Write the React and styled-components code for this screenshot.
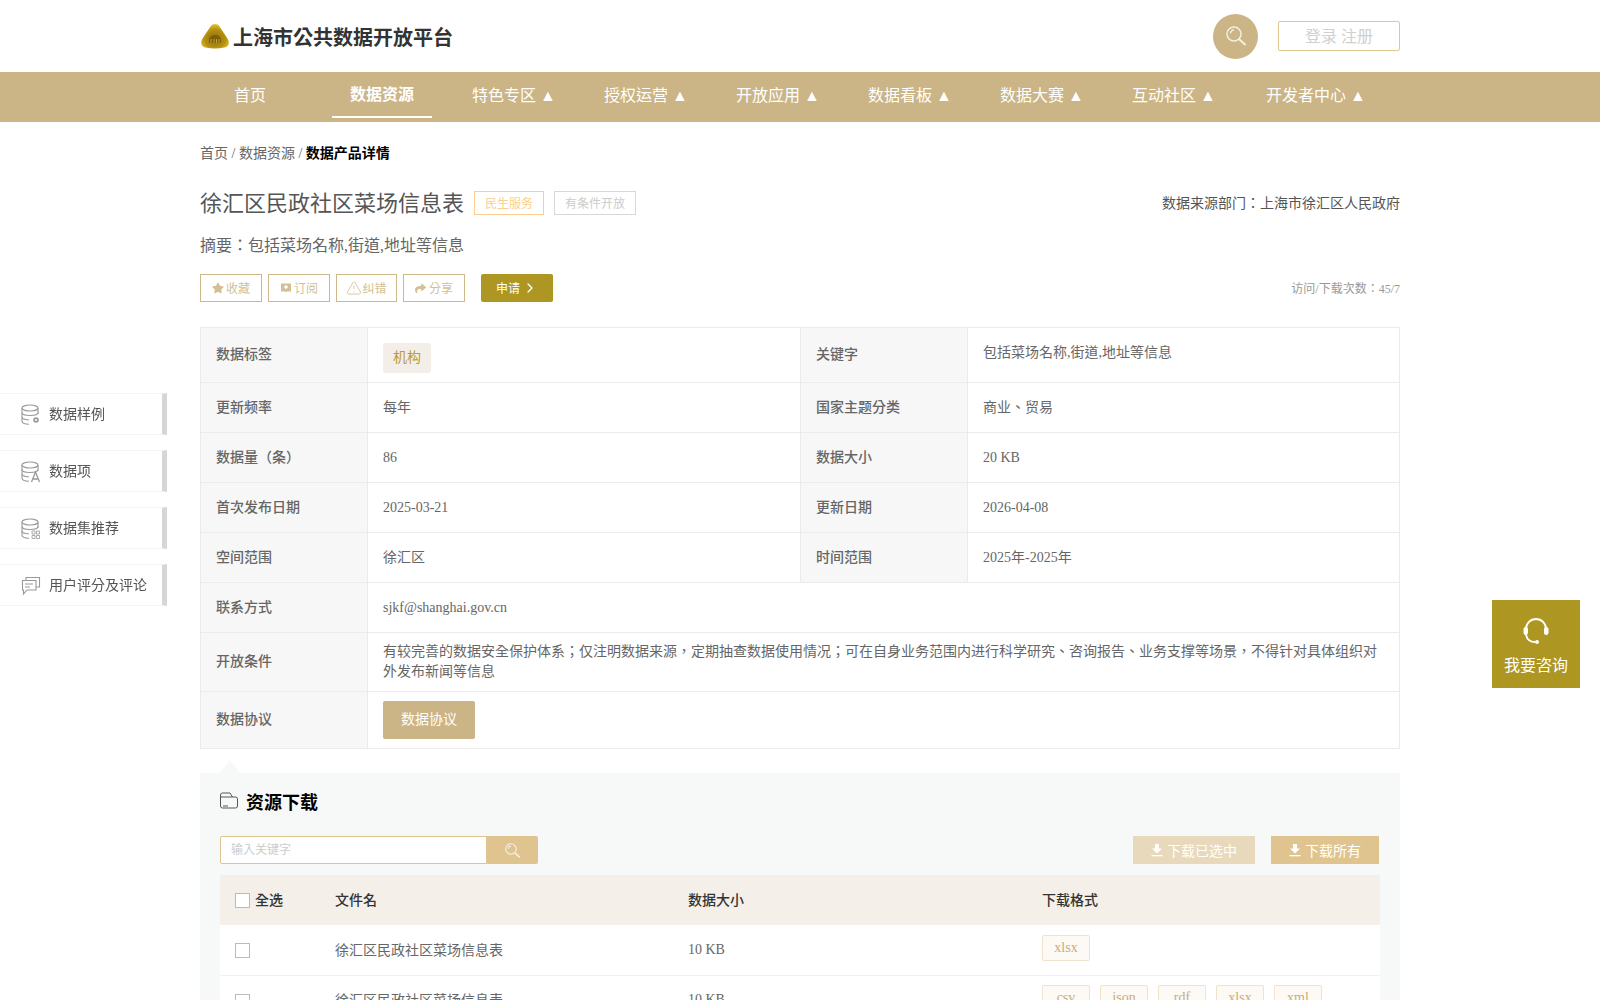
import styled, { createGlobalStyle } from 'styled-components';
import { ChevronRight, TriangleAlert } from 'lucide-react';
import { FaStar, FaShare } from 'react-icons/fa';

const GlobalStyle = createGlobalStyle`
	* { box-sizing: border-box; }
	html, body { margin: 0; padding: 0; background: #fff; overflow-x: hidden; }
	body {
		font-family: "Liberation Serif", "Noto Sans CJK TC", serif;
		font-size: 14px;
		color: #666;
	}
`;

const Wrap = styled.div`
	width: 1200px;
	margin: 0 auto;
`;
const HeaderRow = styled(Wrap)`
	height: 72px;
	display: flex;
	align-items: center;
	justify-content: space-between;
`;
const Brand = styled.div`
	display: flex;
	align-items: center;
	font-size: 20px;
	font-weight: 700;
	color: #333;
	svg { margin: 0 4px 0 1px; }
`;
const HeaderRight = styled.div`
	display: flex;
	align-items: center;
	gap: 20px;
`;
const SearchCircle = styled.div`
	width: 45px;
	height: 45px;
	border-radius: 50%;
	background: #cbb485;
	display: flex;
	align-items: center;
	justify-content: center;
`;
const LoginBtn = styled.div`
	width: 122px;
	height: 30px;
	border: 1px solid #e2c68f;
	border-radius: 2px;
	color: #d0d0d0;
	font-size: 16px;
	line-height: 29px;
	text-align: center;
`;
const NavBar = styled.div`
	height: 50px;
	background: #cbb485;
`;
const NavRow = styled(Wrap)`
	display: flex;
	gap: 32px;
`;
const NavItem = styled.div`
	flex: 0 0 ${p => p.$w || 100}px;
	height: 46px;
	text-align: center;
	color: #fff;
	font-size: 16px;
	line-height: 47px;
	white-space: nowrap;
	font-weight: ${p => (p.$active ? 700 : 400)};
	border-bottom: ${p => (p.$active ? '2px solid #fff' : 'none')};
	${p => p.$active && 'line-height: 45px;'}
`;
const Crumbs = styled.div`
	margin-top: 22px;
	height: 20px;
	line-height: 20px;
	color: #666;
	b { color: #000; }
`;
const TitleRow = styled.div`
	margin-top: 23px;
	height: 32px;
	display: flex;
	align-items: center;
	color: #555;
`;
const Title = styled.div`
	font-size: 22px;
	margin: 0 10px 4px 0;
`;
const Tag = styled.span`
	height: 24px;
	line-height: 24px;
	padding: 0 10px;
	margin-right: 10px;
	font-size: 12px;
	border: 1px solid ${p => p.$line};
	color: ${p => p.$color};
`;
const Source = styled.div`
	margin: 0 0 2px auto;
`;
const Summary = styled.div`
	margin-top: 15px;
	font-size: 16px;
	line-height: 24px;
	color: #666;
`;
const ActionRow = styled.div`
	margin-top: 16px;
	height: 28px;
	display: flex;
	align-items: center;
	gap: 6px;
`;
const ActionBtn = styled.div`
	width: ${p => p.$w || 62}px;
	height: 28px;
	display: flex;
	align-items: center;
	justify-content: center;
	gap: ${p => p.$gap ?? 2}px;
	border: 1px solid #cfb88a;
	color: #d3bf95;
	font-size: 12px;
	white-space: nowrap;
`;
const ApplyBtn = styled.div`
	width: 72px;
	height: 28px;
	margin-left: 10px;
	padding-bottom: 1px;
	border-radius: 2px;
	background: #ae9623;
	color: #fff;
	font-size: 12px;
	display: flex;
	align-items: center;
	justify-content: center;
	gap: 2px;
`;
const Visits = styled.div`
	margin-left: auto;
	font-size: 12px;
	color: #999;
`;
const InfoTable = styled.table`
	margin-top: 25px;
	width: 1199px;
	border-collapse: collapse;
	table-layout: fixed;
	td { border: 1px solid #ebebeb; padding: 0 15px; line-height: 20px; }
`;
const Th = styled.td`
	background: #f7f7f7;
	font-weight: 500;
	color: #666;
`;
const Tr = styled.tr`
	height: ${p => p.$h}px;
`;
const KeywordCell = styled.td`
	&& { padding-bottom: 5px; }
`;
const LabelChip = styled.span`
	display: inline-block;
	margin-top: 6px;
	height: 30px;
	line-height: 30px;
	padding: 0 10px;
	border-radius: 3px;
	background: #f3efe8;
	color: #b99c2f;
`;
const AgreementBtn = styled.div`
	width: 92px;
	height: 38px;
	line-height: 38px;
	text-align: center;
	border-radius: 2px;
	background: #cbb485;
	color: #fff;
`;
const Panel = styled.div`
	position: relative;
	margin-top: 24px;
	padding: 0 20px 20px;
	background: #f7f9f9;
	&::before {
		content: '';
		position: absolute;
		left: 20px;
		top: -13px;
		border-left: 10px solid transparent;
		border-right: 10px solid transparent;
		border-bottom: 13px solid #f7f9f9;
	}
`;
const PanelHead = styled.div`
	height: 63px;
	display: flex;
	align-items: center;
	gap: 8px;
	font-size: 18px;
	font-weight: 700;
	color: #000;
	padding-bottom: 8px;
`;
const ToolRow = styled.div`
	display: flex;
	align-items: center;
	height: 28px;
	padding-right: 1px;
`;
const SearchBox = styled.div`
	width: 267px;
	height: 28px;
	border: 1px solid #e0c48f;
	border-radius: 2px 0 0 2px;
	background: #fff;
	padding: 0 10px;
	line-height: 27px;
	font-size: 12px;
	color: #ccc;
`;
const SearchBtn = styled.div`
	width: 51px;
	height: 28px;
	background: #dfc490;
	border-radius: 0 2px 2px 0;
	display: flex;
	align-items: center;
	justify-content: center;
`;
const DownloadBtn = styled.div`
	height: 28px;
	margin-left: ${p => p.$ml};
	padding: 0 18px 1px;
	display: flex;
	align-items: center;
	gap: 4px;
	color: #fff;
	background: ${p => p.$bg};
`;
const FileTable = styled.table`
	margin-top: 11px;
	width: 1160px;
	border-collapse: collapse;
	table-layout: fixed;
	background: #fff;
	td { padding: 0 15px; }
`;
const HeadRow = styled.tr`
	height: 50px;
	background: #f4efe8;
	font-weight: 500;
	color: #333;
	td { padding-bottom: 3px; }
`;
const FileRow = styled.tr`
	height: 50px;
	border-bottom: 1px solid #f4efe8;
	color: #666;
`;
const NameCell = styled.td`
	&& { padding-bottom: 2px; }
`;
const FormatCell = styled.td`
	&& { padding-bottom: 4px; }
`;
const SelectCell = styled.div`
	display: flex;
	align-items: center;
	gap: 5px;
`;
const Check = styled.span`
	width: 15px;
	height: 15px;
	margin-top: ${p => p.$mt || 0}px;
	background: #fff;
	border: 1px solid #bbb;
`;
const Formats = styled.div`
	display: flex;
	gap: 10px;
`;
const FormatChip = styled.span`
	width: 48px;
	height: 26px;
	line-height: 24px;
	text-align: center;
	border: 1px solid #f0e2cc;
	border-radius: 2px;
	background: #fdf9f4;
	color: #c9ad7a;
`;
const SideMenu = styled.div`
	position: fixed;
	left: 0;
	top: 393px;
	display: flex;
	flex-direction: column;
	gap: 15px;
`;
const SideItem = styled.div`
	width: 167px;
	height: 42px;
	display: flex;
	align-items: center;
	gap: 8px;
	padding-left: 21px;
	background: #fff;
	border: 1px solid #f3f3f3;
	border-left: none;
	border-right: 5px solid #d6d6d6;
	color: #555;
	white-space: nowrap;
	svg { margin-top: 2px; }
`;
const SideLabel = styled.span`
	margin-bottom: 2px;
`;
const Consult = styled.div`
	position: fixed;
	left: 1492px;
	top: 600px;
	width: 88px;
	height: 88px;
	background: #ae9623;
	color: #fff;
	font-size: 16px;
	display: flex;
	flex-direction: column;
	align-items: center;
	padding-top: 17px;
	gap: 7px;
`;

const Logo = () => (
	<svg width="28" height="25" viewBox="0 0 28 25">
		<defs>
			<radialGradient id="gold" cx="0.5" cy="0.6" r="0.65">
				<stop offset="0" stopColor="#8d6c10" />
				<stop offset="0.6" stopColor="#b8920f" />
				<stop offset="1" stopColor="#ecd23a" />
			</radialGradient>
		</defs>
		<path d="M9.500 2.500c2-3.200 7-3.200 9 0l8 12c2.500 4 1.500 8-3 9-6 1.300-13 1.300-19 0-4.500-1-5.500-5-3-9z" fill="url(#gold)" />
		<path d="M8 19v-3a6 5 0 0 1 12 0v3z" fill="#7d5e0c" />
		<path d="M10 15v4M13 15v4M15.500 15v4M18 15v4" stroke="#d9b92c" strokeWidth="0.800" />
	</svg>
);

const SearchIcon = ({ size = 20 }) => (
	<svg width={size} height={size} viewBox="0 0 20 20" fill="none" stroke="#f5f0e4" strokeWidth="1.500">
		<circle cx="8" cy="8" r="7" />
		<path d="M4.500 7.500a3.500 3.500 0 0 1 3.500-3.500" />
		<path d="M13.500 13.500l5.500 5" strokeWidth="2" strokeLinecap="round" />
	</svg>
);

const MessageIcon = () => (
	<svg width="12" height="12" viewBox="0 0 12 12">
		<path d="M1 1.500h10v8H6.500L6 11l-.5-1.500H1z" fill="#d3bf95" />
		<circle cx="6" cy="5" r="1.800" fill="#fff" />
	</svg>
);

const DownloadIcon = () => (
	<svg width="12" height="14" viewBox="0 0 12 14" fill="#fff">
		<path d="M4 1h4v4.500h3L6 10.500 1 5.500h3z" />
		<rect x="0.500" y="12" width="11" height="1.300" />
	</svg>
);

const FolderIcon = () => (
	<svg width="18" height="17" viewBox="0 0 18 17" fill="none" stroke="#555" strokeWidth="1">
		<path d="M.500 14V3a2 2 0 0 1 2-2h7.500l2.500 4h3a2 2 0 0 1 2 2v7a2 2 0 0 1-2 2h-13a2 2 0 0 1-2-2z" />
		<path d="M.500 5h12" />
		<path d="M3 14h5" />
	</svg>
);

const Database = ({ children }) => (
	<svg width="20" height="22" viewBox="0 0 20 22" fill="none" stroke="#999" strokeWidth="1.100">
		<ellipse cx="9" cy="4" rx="8" ry="3" />
		<path d="M1 4v13c0 1.800 3 3.200 7 3.200" />
		<path d="M17 4v6" />
		<path d="M1 8.500c0 1.700 3.500 3 8 3s8-1.300 8-3" />
		<path d="M1 13c0 1.500 3 2.700 7 3" />
		{children}
	</svg>
);

const CommentIcon = () => (
	<svg width="20" height="20" viewBox="0 0 20 20" fill="none" stroke="#999" strokeWidth="1.100">
		<path d="M5 4V1.500h13.500V11H15" />
		<path d="M1.500 4.500H15V14H6l-3.500 4v-4h-1z" />
		<path d="M4 8h8M4 11h5" />
	</svg>
);

const Headset = () => (
	<svg width="28" height="28" viewBox="0 0 28 28" fill="none" stroke="#fff" strokeWidth="1.800">
		<path d="M4 13V12a10 10 0 0 1 20 0v1" />
		<rect x="1.500" y="10" width="4.500" height="8" rx="2.200" fill="#fff" stroke="none" />
		<rect x="22" y="10" width="4.500" height="8" rx="2.200" fill="#fff" stroke="none" />
		<path d="M4 18c1 4 4 7 9 7" />
		<circle cx="15" cy="25" r="2" fill="#fff" stroke="none" />
	</svg>
);

const navItems = ['特色专区', '授权运营', '开放应用', '数据看板', '数据大赛', '互动社区'];

const infoRows = [
	['更新频率', '每年', '国家主题分类', '商业、贸易'],
	['数据量（条）', '86', '数据大小', '20 KB'],
	['首次发布日期', '2025-03-21', '更新日期', '2026-04-08'],
	['空间范围', '徐汇区', '时间范围', '2025年-2025年'],
];

const App = () => {
	return (
		<>
			<GlobalStyle />
			<HeaderRow>
				<Brand>
					<Logo />
					上海市公共数据开放平台
				</Brand>
				<HeaderRight>
					<SearchCircle><SearchIcon /></SearchCircle>
					<LoginBtn>登录 注册</LoginBtn>
				</HeaderRight>
			</HeaderRow>
			<NavBar>
				<NavRow>
					<NavItem>首页</NavItem>
					<NavItem $active>数据资源</NavItem>
					{navItems.map(item => (
						<NavItem key={item}>{item} ▲</NavItem>
					))}
					<NavItem $w={120}>开发者中心 ▲</NavItem>
				</NavRow>
			</NavBar>
			<Wrap>
				<Crumbs>首页 / 数据资源 / <b>数据产品详情</b></Crumbs>
				<TitleRow>
					<Title>徐汇区民政社区菜场信息表</Title>
					<Tag $line="#fcd08c" $color="#fcd08c">民生服务</Tag>
					<Tag $line="#d8d8d8" $color="#ccc">有条件开放</Tag>
					<Source>数据来源部门：上海市徐汇区人民政府</Source>
				</TitleRow>
				<Summary>摘要：包括菜场名称,街道,地址等信息</Summary>
				<ActionRow>
					<ActionBtn><FaStar size={12} />收藏</ActionBtn>
					<ActionBtn><MessageIcon />订阅</ActionBtn>
					<ActionBtn $w={61} $gap={0}><TriangleAlert size={16} strokeWidth={1.300} />纠错</ActionBtn>
					<ActionBtn $gap={3}><FaShare size={11} />分享</ActionBtn>
					<ApplyBtn>申请<ChevronRight size={16} /></ApplyBtn>
					<Visits>访问/下载次数：45/7</Visits>
				</ActionRow>
				<InfoTable>
					<colgroup>
						<col width="167" />
						<col width="433" />
						<col width="167" />
						<col width="432" />
					</colgroup>
					<tbody>
						<Tr $h={55}>
							<Th>数据标签</Th>
							<td><LabelChip>机构</LabelChip></td>
							<Th>关键字</Th>
							<KeywordCell>包括菜场名称,街道,地址等信息</KeywordCell>
						</Tr>
						{infoRows.map(row => (
							<Tr $h={50} key={row[0]}>
								<Th>{row[0]}</Th>
								<td>{row[1]}</td>
								<Th>{row[2]}</Th>
								<td>{row[3]}</td>
							</Tr>
						))}
						<Tr $h={50}>
							<Th>联系方式</Th>
							<td colSpan={3}>sjkf@shanghai.gov.cn</td>
						</Tr>
						<Tr $h={59}>
							<Th>开放条件</Th>
							<td colSpan={3}>有较完善的数据安全保护体系；仅注明数据来源，定期抽查数据使用情况；可在自身业务范围内进行科学研究、咨询报告、业务支撑等场景，不得针对具体组织对外发布新闻等信息</td>
						</Tr>
						<Tr $h={57}>
							<Th>数据协议</Th>
							<td colSpan={3}><AgreementBtn>数据协议</AgreementBtn></td>
						</Tr>
					</tbody>
				</InfoTable>
				<Panel>
					<PanelHead><FolderIcon />资源下载</PanelHead>
					<ToolRow>
						<SearchBox>输入关键字</SearchBox>
						<SearchBtn><SearchIcon size={15} /></SearchBtn>
						<DownloadBtn $bg="#e9d9bc" $ml="auto"><DownloadIcon />下载已选中</DownloadBtn>
						<DownloadBtn $bg="#dfc490" $ml="16px"><DownloadIcon />下载所有</DownloadBtn>
					</ToolRow>
					<FileTable>
						<colgroup>
							<col width="100" />
							<col width="353" />
							<col width="354" />
							<col width="353" />
						</colgroup>
						<tbody>
							<HeadRow>
								<td><SelectCell><Check $mt={3} />全选</SelectCell></td>
								<td>文件名</td>
								<td>数据大小</td>
								<td>下载格式</td>
							</HeadRow>
							<FileRow>
								<td><SelectCell><Check $mt={2} /></SelectCell></td>
								<NameCell>徐汇区民政社区菜场信息表</NameCell>
								<td>10 KB</td>
								<FormatCell><Formats><FormatChip>xlsx</FormatChip></Formats></FormatCell>
							</FileRow>
							<FileRow>
								<td><SelectCell><Check $mt={2} /></SelectCell></td>
								<NameCell>徐汇区民政社区菜场信息表</NameCell>
								<td>10 KB</td>
								<FormatCell>
									<Formats>
										{['csv', 'json', 'rdf', 'xlsx', 'xml'].map(f => (
											<FormatChip key={f}>{f}</FormatChip>
										))}
									</Formats>
								</FormatCell>
							</FileRow>
						</tbody>
					</FileTable>
				</Panel>
			</Wrap>
			<SideMenu>
				<SideItem>
					<Database><circle cx="15" cy="16" r="2.800" fill="#999" stroke="none" /><circle cx="15" cy="16" r="1.100" fill="#fff" stroke="none" /></Database>
					<SideLabel>数据样例</SideLabel>
				</SideItem>
				<SideItem>
					<Database><path d="M10.500 21l4-10 4 10M12 18h5" strokeWidth="1.300" /></Database>
					<SideLabel>数据项</SideLabel>
				</SideItem>
				<SideItem>
					<Database><path d="M11 13h3v3h-3zM15.500 13h3v3h-3zM11 17.500h3v3h-3zM15.500 17.500h3v3h-3z" strokeWidth="0.800" /></Database>
					<SideLabel>数据集推荐</SideLabel>
				</SideItem>
				<SideItem><CommentIcon /><SideLabel>用户评分及评论</SideLabel></SideItem>
			</SideMenu>
			<Consult>
				<Headset />
				我要咨询
			</Consult>
		</>
	);
};

export default App;
